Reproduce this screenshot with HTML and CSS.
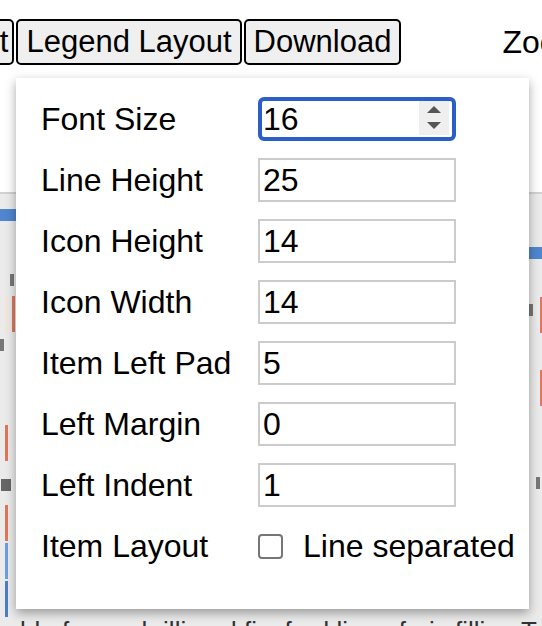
FILE: index.html
```html
<!DOCTYPE html>
<html lang="en">
<head>
  <meta charset="UTF-8">
  <meta name="viewport" content="width=device-width, initial-scale=1.0">
  <title>Legend Layout</title>
  <link rel="stylesheet" href="styles.css">
</head>
<body>
  <div class="toolbar">
    <button class="btn btn-cut">Edit</button>
    <button class="btn">Legend Layout</button>
    <button class="btn">Download</button>
    <span class="zoom-label">Zoom</span>
  </div>

  <!-- chart behind the popover, only edges visible -->
  <div class="chart">
    <div class="mark bar-blue" style="left: 0; top: 15px; width: 30px;"></div>
    <div class="mark bar-blue" style="left: 520px; top: 53px; width: 30px;"></div>
    <div class="mark tick" style="left: 10px; top: 80px; height: 12px;"></div>
    <div class="mark line-peach" style="left: 5px; top: 102px; height: 38px;"></div>
    <div class="mark line-red" style="left: 12px; top: 102px; height: 36px;"></div>
    <div class="mark tick" style="left: 0; top: 145px; height: 12px;"></div>
    <div class="mark line-red" style="left: 5px; top: 231px; height: 36px;"></div>
    <div class="mark block" style="left: 1px; top: 285px;"></div>
    <div class="mark line-red" style="left: 5px; top: 311px; height: 36px;"></div>
    <div class="mark line-blue" style="left: 5px; top: 349px; height: 36px;"></div>
    <div class="mark line-dblue" style="left: 5px; top: 387px; height: 36px;"></div>
    <div class="mark tick" style="left: 529px; top: 110px; height: 12px;"></div>
    <div class="mark line-red" style="left: 540px; top: 103px; height: 36px;"></div>
    <div class="mark line-red" style="left: 540px; top: 176px; height: 36px;"></div>
    <div class="mark tick" style="left: 536px; top: 283px; height: 12px;"></div>
    <div class="chart-text">ble for each illi and ficeford lieen feris filling To dis</div>
  </div>

  <div class="popover">
    <div class="form-grid">
      <label class="form-label">Font Size</label>
      <div class="spin-wrap">
        <input class="field focused" type="text" value="16">
        <span class="spinner">
          <svg width="30" height="34" viewBox="0 0 30 34">
            <path d="M8 12 L15 5 L22 12 Z" fill="#555"/>
            <path d="M8 21 L15 28 L22 21 Z" fill="#555"/>
          </svg>
        </span>
      </div>

      <label class="form-label">Line Height</label>
      <input class="field" type="text" value="25">

      <label class="form-label">Icon Height</label>
      <input class="field" type="text" value="14">

      <label class="form-label">Icon Width</label>
      <input class="field" type="text" value="14">

      <label class="form-label">Item Left Pad</label>
      <input class="field" type="text" value="5">

      <label class="form-label">Left Margin</label>
      <input class="field" type="text" value="0">

      <label class="form-label">Left Indent</label>
      <input class="field" type="text" value="1">

      <span class="form-label">Item Layout</span>
      <label class="check">
        <span class="check-box"></span>
        Line separated
      </label>
    </div>
  </div>
</body>
</html>
```

FILE: styles.css
```css
body {
  font-family: "Liberation Sans", Arial, sans-serif;
  margin: 0;
  padding: 0;
  background-color: #fff;
  color: #000;
  overflow: hidden;
}
.toolbar {
  box-sizing: border-box;
  height: 194px;
  padding-top: 19px;
  display: flex;
  align-items: flex-start;
  gap: 2px;
  border-bottom: 2px solid #d2d2d2;
}
.btn {
  flex-shrink: 0;
  font-family: inherit;
  font-size: 31px;
  height: 46px;
  padding: 0 8px;
  border: 2px solid #000;
  border-radius: 5px;
  background-color: #efefef;
  color: #000;
  white-space: nowrap;
}
.btn-cut {
  padding-right: 4px;
  margin-left: -55px;
}
.zoom-label {
  flex-shrink: 0;
  font-size: 32px;
  margin-left: 99px;
  line-height: 46px;
  white-space: nowrap;
}
.chart {
  position: relative;
  height: 432px;
  background-color: #ebebeb;
  overflow: hidden;
}
.mark {
  position: absolute;
  width: 3px;
}
.bar-blue {
  height: 12px;
  background-color: #4f86cf;
}
.tick {
  width: 4px;
  background-color: #777;
}
.line-peach {
  background-color: #f6e6da;
}
.line-red {
  background-color: #e0775a;
}
.line-blue {
  background-color: #6b9fd6;
}
.line-dblue {
  background-color: #4a7fc4;
}
.block {
  width: 10px;
  height: 12px;
  background-color: #666;
}
.chart-text {
  position: absolute;
  left: 20px;
  top: 422px;
  font-size: 26px;
  color: #333;
  white-space: nowrap;
}
.popover {
  position: absolute;
  left: 16px;
  top: 78px;
  width: 513px;
  height: 531px;
  box-sizing: border-box;
  padding: 19px 0 0 25px;
  background-color: #fff;
  box-shadow: 0 4px 10px rgba(0, 0, 0, 0.35);
}
.form-grid {
  display: grid;
  grid-template-columns: 217px 198px;
  grid-auto-rows: 44px;
  row-gap: 17px;
  align-items: center;
}
.form-label {
  font-size: 32px;
  white-space: nowrap;
}
.field {
  box-sizing: border-box;
  width: 198px;
  height: 44px;
  padding: 0 3px;
  border: 2px solid #cccccc;
  font-family: inherit;
  font-size: 32px;
  color: #000;
  outline: none;
}
.spin-wrap {
  position: relative;
  height: 44px;
}
.field.focused {
  border: 4px solid #2b5fc7;
  border-radius: 6px;
  padding-left: 1px;
}
.spinner {
  position: absolute;
  left: 161px;
  top: 4px;
  width: 30px;
  height: 34px;
  background-color: #efefef;
}
.spinner svg {
  display: block;
}
.check {
  display: flex;
  align-items: center;
  gap: 20px;
  font-size: 32px;
  white-space: nowrap;
}
.check-box {
  flex-shrink: 0;
  box-sizing: border-box;
  width: 25px;
  height: 25px;
  border: 2px solid #767676;
  border-radius: 4px;
  background-color: #fff;
}
```
